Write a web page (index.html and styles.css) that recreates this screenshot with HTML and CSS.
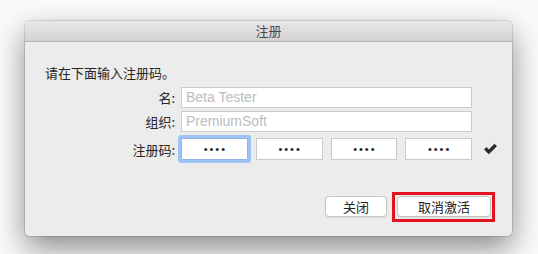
FILE: index.html
```html
<!DOCTYPE html>
<html>
<head>
  <title>注册</title>
  <meta charset="utf-8">
  <link rel="stylesheet" href="styles.css">
</head>
<body>
  <div class="window">
    <div class="titlebar">注册</div>

    <div class="content">
      <p class="intro">请在下面输入注册码。</p>

      <div class="row">
        <label class="label">名:</label>
        <div class="field placeholder">Beta Tester</div>
      </div>
      <div class="row">
        <label class="label">组织:</label>
        <div class="field placeholder">PremiumSoft</div>
      </div>
      <div class="row reg">
        <label class="label">注册码:</label>
        <div class="keys">
          <div class="field key focused">••••</div>
          <div class="field key">••••</div>
          <div class="field key">••••</div>
          <div class="field key">••••</div>
        </div>
        <svg class="check" width="15" height="12" viewBox="0 0 15 12">
          <path d="M1 6.5 L3.5 4 L5.8 6.6 L11.5 0.8 L14 3.2 L5.8 11.2 Z" fill="#2b2b2b"/>
        </svg>
      </div>

      <div class="actions">
        <button class="btn close">关闭</button>
        <button class="btn deactivate">取消激活</button>
      </div>
    </div>
  </div>
</body>
</html>
```

FILE: styles.css
```css
html {
  background: #fafafa;
}

body {
  margin: 0;
  min-height: 254px;
  box-sizing: border-box;
  padding: 21px 0 0 25px;
  font-family: "Noto Sans CJK SC", "Liberation Sans", sans-serif;
  font-size: 13px;
  color: #262626;
}

.window {
  width: 487px;
  height: 215px;
  background: #ececec;
  border-radius: 5px;
  box-shadow: 0 0 0 1px rgba(0, 0, 0, 0.12), 0 12px 30px rgba(0, 0, 0, 0.45);
  display: flex;
  flex-direction: column;
  overflow: hidden;
}

.titlebar {
  height: 20px;
  line-height: 20px;
  text-align: center;
  color: #4a4a4a;
  background: linear-gradient(#e9e7e9, #d3d1d3);
  border-bottom: 1px solid #b3b3b3;
}

.content {
  flex: 1;
  display: flex;
  flex-direction: column;
  padding: 23px 21px 19px 20px;
}

.intro {
  margin: 0 0 6px;
  line-height: 16px;
}

.row {
  display: flex;
  align-items: center;
  margin: 0 19px 3px 0;
}

.label {
  width: 130px;
  text-align: right;
  padding-right: 6px;
}

.field {
  flex: 1;
  height: 19px;
  line-height: 19px;
  background: #fff;
  border: 1px solid #cbcbcb;
  padding: 0 4px;
  font-family: "Liberation Sans", sans-serif;
  font-size: 14px;
}

.placeholder {
  color: #bcbcbc;
}

.row.reg {
  margin-top: 3px;
  margin-right: -7px;
}

.keys {
  flex: 1;
  display: flex;
  gap: 8px;
}

.key {
  height: 20px;
  line-height: 20px;
  text-align: center;
  color: #1e1e1e;
  font-size: 11px;
  letter-spacing: 2px;
  text-indent: 2px;
}

.key.focused {
  border-color: #8eb3e6;
  box-shadow: 0 0 0 3px #9dc4f4;
  border-radius: 1px;
}

.check {
  margin-left: 11px;
}

.actions {
  margin-top: auto;
  display: flex;
  justify-content: flex-end;
  gap: 10px;
}

.btn {
  font-family: "Noto Sans CJK SC", sans-serif;
  font-size: 13px;
  color: #222;
  background: #fff;
  border: 1px solid #c6c6c6;
  border-radius: 4px;
  height: 21px;
  padding: 0;
  line-height: 19px;
  box-shadow: 0 1px 1px rgba(0, 0, 0, 0.08);
}

.close {
  width: 62px;
}

.deactivate {
  width: 94px;
  position: relative;
}

/* highlight marker around the button */
.deactivate:after {
  content: "";
  position: absolute;
  top: -5px;
  left: -6px;
  right: -5px;
  bottom: -6px;
  border: 3px solid #e3141f;
}
```
